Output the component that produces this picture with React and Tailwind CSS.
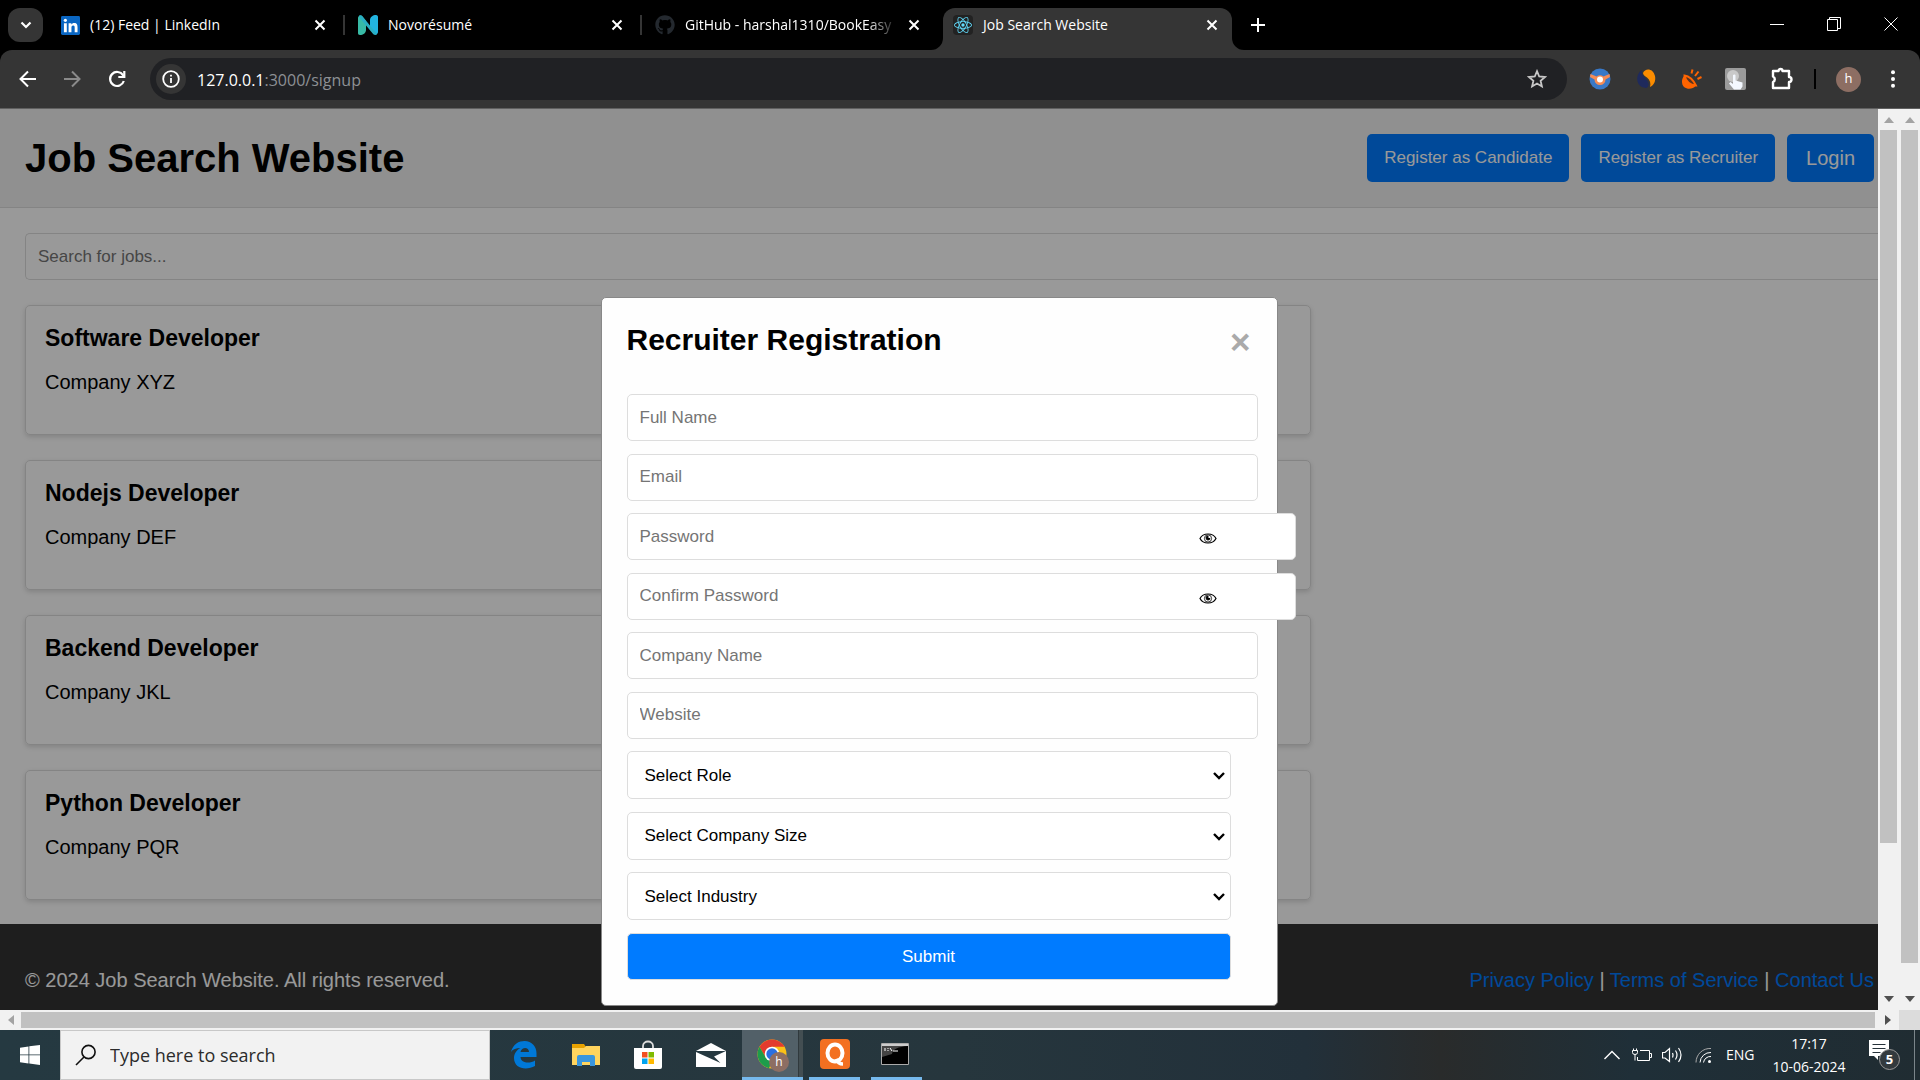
import { SiReact } from "react-icons/si";
import { FaGithub } from "react-icons/fa";

const uiFont = "font-['Open_Sans','Noto_Sans',sans-serif]";

function CloseX() {
  return (
    <svg viewBox="0 0 12 12" className="size-3 shrink-0" fill="none" stroke="#fff" strokeWidth="2">
      <path d="M1.5 1.5l9 9M10.5 1.5l-9 9" />
    </svg>
  );
}

function LinkedIn() {
  return (
    <svg viewBox="0 0 20 20" className="size-[19px] shrink-0">
      <rect width="20" height="20" rx="1.5" fill="#0a66c2" />
      <g fill="#fff">
        <circle cx="4.6" cy="4.6" r="1.7" />
        <path d="M3.1 7.6h3v9.4h-3zM8 7.6h2.9v1.3c.5-.9 1.6-1.6 3-1.6 3 0 3.5 2 3.5 4.500V17h-3v-4.600c0-1.200 0-2.500-1.600-2.500s-1.800 1.200-1.800 2.500V17H8z" />
      </g>
    </svg>
  );
}

function Novo() {
  return (
    <svg viewBox="0 0 20 20" className="size-5 shrink-0">
      <path d="M0 3C0 .5 3-.5 4.500 1.500L8 6v9c0 3-3 5-6 5-1.500 0-2-1-2-2z" fill="#38baa5" />
      <path d="M20 17c0 2.500-3 3.500-4.500 1.500L12 14V5c0-3 3-5 6-5 1.500 0 2 1 2 2z" fill="#22b3df" />
      <path d="M1 .8C2.500-.3 4 .5 5 2l14 17c-1 1.300-3 1.300-4.300-.5L1 2z" fill="#2aafc2" />
    </svg>
  );
}

const tabs = [
  { title: "(12) Feed | LinkedIn", icon: <LinkedIn /> },
  { title: "Novorésumé", icon: <Novo /> },
  { title: "GitHub - harshal1310/BookEasy", icon: <FaGithub className="size-5 shrink-0 text-[#24292f]" />, fade: true },
];

function TabStrip() {
  return (
    <div className="flex h-[50px] shrink-0 items-end bg-black text-sm text-white">
      <button aria-label="Search tabs" className="mb-2 ml-2 mr-[18px] grid h-[34px] w-[35px] shrink-0 place-items-center rounded-xl bg-[#353535]">
        <svg viewBox="0 0 12 8" className="h-2 w-3" fill="none" stroke="#fff" strokeWidth="2.200"><path d="M1.500 1.500L6 6l4.500-4.500" /></svg>
      </button>
      {tabs.map((t) => (
        <div key={t.title} className={`mb-2 flex h-[34px] shrink-0 items-center ${t.fade ? "w-[288px]" : "w-[297px]"}`}>
          <div className="flex w-[265px] items-center gap-[10px]">
            {t.icon}
            <span className={`flex-1 whitespace-nowrap ${t.fade ? "[mask-image:linear-gradient(to_right,#000_85%,transparent)]" : ""}`}>{t.title}</span>
            <button aria-label="Close tab"><CloseX /></button>
          </div>
          {!t.fade && <div className="ml-[17px] h-5 w-[2px] bg-[#353535]" />}
        </div>
      ))}
      <div className="relative flex h-[42px] w-[289px] shrink-0 items-center gap-[10px] rounded-t-xl bg-[#353535] pb-2 pl-[10px] pr-[14px]">
        <svg viewBox="0 0 12 12" className="absolute -left-3 bottom-0 size-3"><path d="M12 0v12H0A12 12 0 0012 0z" fill="#353535" /></svg>
        <svg viewBox="0 0 12 12" className="absolute -right-3 bottom-0 size-3"><path d="M0 0v12h12A12 12 0 010 0z" fill="#353535" /></svg>
        <span className="grid size-5 place-items-center rounded bg-[#222]"><SiReact className="size-[18px] text-[#61dafb]" /></span>
        <span className="flex-1 whitespace-nowrap">Job Search Website</span>
        <button aria-label="Close tab"><CloseX /></button>
      </div>
      <button aria-label="New tab" className="mb-[18px] ml-[19px]">
        <svg viewBox="0 0 14 14" className="size-[14px]" stroke="#fff" strokeWidth="2"><path d="M7 0v14M0 7h14" /></svg>
      </button>
      <div className="mb-[19px] ml-auto mr-[22px] flex items-center gap-[43px]">
        <button aria-label="Minimize"><svg viewBox="0 0 14 14" className="size-[14px]" stroke="#fff"><path d="M0 7.500h14" /></svg></button>
        <button aria-label="Restore"><svg viewBox="0 0 14 14" className="size-[14px]" stroke="#fff" fill="none"><path d="M.5 2.500h10v11h-10zM2.500 2.500v-2h11v11h-3" /></svg></button>
        <button aria-label="Close window"><svg viewBox="0 0 14 14" className="size-[14px]" stroke="#fff"><path d="M.5.5l13 13M13.500.5l-13 13" /></svg></button>
      </div>
    </div>
  );
}

function Toolbar() {
  return (
    <div className="shrink-0 bg-black">
      <div className="flex h-[59px] items-center rounded-t-xl border-b border-[#606060] bg-[#353535]">
        <button aria-label="Back" className="ml-[19px]">
          <svg viewBox="0 0 18 18" className="size-[18px]" fill="none" stroke="#fff" strokeWidth="2"><path d="M17 9H2M9 1.500L1.500 9 9 16.500" /></svg>
        </button>
        <button aria-label="Forward" className="ml-[26px]">
          <svg viewBox="0 0 18 18" className="size-[18px]" fill="none" stroke="#8a8a8a" strokeWidth="2"><path d="M1 9h15M9 1.500L16.500 9 9 16.500" /></svg>
        </button>
        <button aria-label="Reload" className="ml-[27px]">
          <svg viewBox="0 0 18 18" className="size-[18px]" fill="none" stroke="#fff" strokeWidth="2.200"><path d="M15.800 11A7 7 0 1115 5.200l1 1.300" /><path d="M16.300 1v6h-6" /></svg>
        </button>
        <div className="ml-6 flex h-[42px] flex-1 items-center rounded-full bg-[#202124] pl-[6px] pr-5">
          <button aria-label="Site information" className="grid size-[30px] shrink-0 place-items-center rounded-full bg-[#353535]">
            <svg viewBox="0 0 18 18" className="size-[18px]" fill="none" stroke="#fff" strokeWidth="1.800"><circle cx="9" cy="9" r="7.800" /><path d="M9 8v5M9 4.800v1.800" /></svg>
          </button>
          <p className="ml-[11px] flex-1 pt-px text-base text-[#8d9094]"><span className="text-white">127.0.0.1</span>:3000/signup</p>
          <button aria-label="Bookmark">
            <svg viewBox="0 0 20 20" className="size-5" fill="none" stroke="#c7c7c7" strokeWidth="1.800"><path d="M10 2.200l2.200 5.300 5.800.5-4.400 3.800 1.300 5.600L10 14.500l-4.900 2.900 1.300-5.600L2 8l5.800-.5z" /></svg>
          </button>
        </div>
        <div className="ml-[22px] mr-6 flex items-center">
          <svg viewBox="0 0 22 22" className="size-[22px]"><circle cx="11" cy="11" r="10.500" fill="#3878c7" /><path d="M1.500 6l6 2.500a6 6 0 017 0l6-2.500.5 3-4.500 2.500a5.500 5.500 0 01-11 0L1 9z" fill="#f58b54" /><circle cx="11" cy="11.500" r="3" fill="#fff" /></svg>
          <svg viewBox="0 0 22 22" className="ml-6 size-[22px]"><path d="M7 2C1 5-1 19 11 20c4-1 3-6 0-9C7.500 8 6 5 7 2z" fill="#1f2a5c" /><path d="M8 5c2-5 10-5 12 3 1 5-1 9-5 11 1-4 0-7-3-9.500C10 8 8 7 8 5z" fill="#fb8c00" /></svg>
          <svg viewBox="0 0 22 22" className="ml-6 size-[22px]"><path d="M3.500 7.500C.5 10 0 16 3 19c4 3 9 2 12-1.500z" fill="#ff6400" /><path d="M3.500 7.500q7 1 11.500 10Q6 17 3.500 7.500z" fill="#5b3320" stroke="#ff6400" strokeWidth="1.800" /><path d="M10.500 5.500l1-4M14 8l3.500-4.500M16.500 11l4-2" stroke="#ff6400" strokeWidth="2" /></svg>
          <svg viewBox="0 0 22 22" className="ml-[22px] size-[22px]"><rect width="21" height="22" rx="2" fill="#9b9b9b" /><circle cx="8" cy="8" r="6" fill="#c9c9c9" /><path d="M8 7c1-1 2.500-.5 2.500.5v5l7 2v4l-2 3H9l-5-6 1.500-1.500L8 16z" fill="#f4f8ff" /></svg>
          <svg viewBox="0 0 22 24" className="ml-6 h-6 w-[22px]" fill="none" stroke="#fff" strokeWidth="2.400"><path d="M2 4h5.500a2 2 0 014 0H18v6a2.200 2.200 0 010 5v6H2v-6a3 3 0 000-5.500z" strokeLinejoin="round" /></svg>
          <div className="ml-[21px] h-5 w-[2px] bg-black" />
          <button aria-label="Profile" className="ml-5 grid size-[25px] place-items-center rounded-full bg-[#8d6e63] text-[13px] text-white">h</button>
          <button aria-label="Menu" className="ml-[29px]"><svg viewBox="0 0 6 18" className="h-[18px] w-[6px]" fill="#fff"><circle cx="3" cy="2.200" r="2" /><circle cx="3" cy="9" r="2" /><circle cx="3" cy="15.800" r="2" /></svg></button>
        </div>
      </div>
    </div>
  );
}

const jobs = [
  ["Software Developer", "Company XYZ"],
  ["Nodejs Developer", "Company DEF"],
  ["Backend Developer", "Company JKL"],
  ["Python Developer", "Company PQR"],
];

function Site() {
  return (
    <div className="flex min-h-full flex-col bg-white text-xl text-black">
      <header className="flex h-[99px] shrink-0 items-center justify-between border-b border-[#ddd] bg-[#f0f0f0] pl-[25px] pr-1">
        <h1 className="text-[40px] font-bold">Job Search Website</h1>
        <div className="flex gap-3 text-[17px] text-white">
          <button className="h-12 rounded-[5px] bg-[#007bff] px-[17px]">Register as Candidate</button>
          <button className="h-12 rounded-[5px] bg-[#007bff] px-[17px]">Register as Recruiter</button>
          <button className="h-12 rounded-[5px] bg-[#007bff] px-[19px] text-xl">Login</button>
        </div>
      </header>
      <main className="flex-1 pb-6 pl-[25px] pt-[25px]">
        <input aria-label="Search for jobs" placeholder="Search for jobs..." className="block h-[47px] w-full rounded-l-[5px] border border-r-0 border-[#ddd] px-3 text-[17px] placeholder:text-[#757575]" />
        <div className="mt-[25px] flex w-[calc(70%-11px)] flex-col gap-[25px]">
          {jobs.map(([title, company]) => (
            <article key={title} className="h-[130px] rounded-[5px] border border-[#ddd] px-[19px] pt-[18px] shadow-[0_2px_5px_rgba(0,0,0,0.15)]">
              <h3 className="text-[23px] font-bold leading-7">{title}</h3>
              <p className="mt-4 leading-7">{company}</p>
            </article>
          ))}
        </div>
      </main>
      <footer className="flex h-[86px] shrink-0 items-center justify-between bg-[#333] pl-[25px] pr-1 pt-[26px] text-white">
        <p>© 2024 Job Search Website. All rights reserved.</p>
        <p>
          <a href="#privacy" className="text-[#007bff]">Privacy Policy</a> | <a href="#terms" className="text-[#007bff]">Terms of Service</a> | <a href="#contact" className="text-[#007bff]">Contact Us</a>
        </p>
      </footer>
    </div>
  );
}

function Eye() {
  return (
    <svg viewBox="0 0 18 11" className="h-[11px] w-[18px]" fill="none" stroke="#000"><path d="M1 5.500C4-.5 14-.5 17 5.500 14 11.500 4 11.500 1 5.500z" strokeWidth="1.200" /><circle cx="9" cy="5.500" r="3.600" strokeWidth=".8" /><path d="M9 3v2.500h2A2 2 0 119 3z" fill="#000" /></svg>
  );
}

const field = "block h-[47px] rounded-[5px] border border-[#ddd] bg-white px-3 text-[17px] placeholder:text-[#757575]";

function TextField({ label }) {
  return <input aria-label={label} placeholder={label} className={`${field} w-[631px]`} />;
}

function PasswordField({ label }) {
  return (
    <div className="relative">
      <input type="password" aria-label={label} placeholder={label} className={`${field} w-[669px]`} />
      <button type="button" aria-label="Show password" className="absolute left-[572px] top-5"><Eye /></button>
    </div>
  );
}

function SelectField({ label }) {
  return (
    <div className="relative">
      <select aria-label={label} className="block h-12 w-full appearance-none rounded-[5px] border border-[#ddd] bg-white px-[17px] text-[17px]">
        <option>{label}</option>
      </select>
      <svg viewBox="0 0 12 8" className="pointer-events-none absolute right-[6px] top-[21px] h-2 w-3" fill="none" stroke="#000" strokeWidth="2.400"><path d="M1 1l5 5 5-5" /></svg>
    </div>
  );
}

function Modal() {
  return (
    <div className="absolute inset-0 flex items-start justify-center bg-black/40 pt-[188px]">
      <section role="dialog" aria-label="Recruiter Registration" className="w-[677px] rounded-[5px] border border-[#888] bg-[#fefefe] pb-[25px] pl-[25px] pr-[46px] pt-6">
        <div className="flex h-[72px] items-start justify-between">
          <h2 className="text-[30px] font-bold leading-9">Recruiter Registration</h2>
          <button aria-label="Close" className="-mr-5 text-[35px] font-bold leading-10 text-[#aaa]">×</button>
        </div>
        <form className="flex min-h-[586px] flex-col justify-between">
          <TextField label="Full Name" />
          <TextField label="Email" />
          <PasswordField label="Password" />
          <PasswordField label="Confirm Password" />
          <TextField label="Company Name" />
          <TextField label="Website" />
          <SelectField label="Select Role" />
          <SelectField label="Select Company Size" />
          <SelectField label="Select Industry" />
          <button type="button" className="h-[47px] w-full rounded-[5px] border border-[#ddd] bg-[#007bff] text-[17px] text-white">Submit</button>
        </form>
      </section>
    </div>
  );
}

function Arrow({ dir, color }) {
  const d = { up: "M0 8l5-6 5 6z", down: "M0 2l5 6 5-6z", left: "M8 0L2 5l6 5z", right: "M2 0l6 5-6 5z" }[dir];
  return <svg viewBox="0 0 10 10" className="size-[10px] shrink-0" fill={color}><path d={d} /></svg>;
}

function VScroll({ thumb }) {
  return (
    <div className="flex w-[21px] shrink-0 flex-col items-center bg-[#f1f1f1] py-[6px]">
      <Arrow dir="up" color="#a3a3a3" />
      <div className="min-h-0 w-full flex-1 px-[2px] py-[5px]"><div className={`${thumb} bg-[#c1c1c1]`} /></div>
      <Arrow dir="down" color="#505050" />
    </div>
  );
}

function HScroll() {
  return (
    <div className="flex h-5 shrink-0 bg-[#f1f1f1]">
      <div className="flex flex-1 items-center px-[6px]">
        <Arrow dir="left" color="#a3a3a3" />
        <div className="mx-[5px] h-4 flex-1"><div className="mr-[3px] h-4 bg-[#c1c1c1]" /></div>
        <Arrow dir="right" color="#505050" />
      </div>
      <div className="w-[21px] bg-[#dcdcdc]" />
    </div>
  );
}

function Taskbar() {
  return (
    <div className="flex h-[50px] shrink-0 items-stretch bg-[linear-gradient(to_right,#253941,#26363d_50%,#22303a_68%,#292b2b_75%,#1f2f38_85%,#202c32)] text-white">
      <button aria-label="Start" className="grid w-[60px] place-items-center">
        <svg viewBox="0 0 20 20" className="size-5" fill="#fff"><path d="M0 2.800l8.500-1.300v8H0zM9.300 1.300L20 0v9.500H9.300zM0 10.300h8.500v8.200L0 17.300zM9.300 10.300H20V20L9.300 18.600z" /></svg>
      </button>
      <label className="flex w-[430px] items-center border border-[#c8c8c8] bg-[#f2f2f2] pl-[14px]">
        <svg viewBox="0 0 22 22" className="size-[22px]" fill="none" stroke="#111" strokeWidth="1.600"><circle cx="13.500" cy="8" r="6.600" /><path d="M9 13L1 21" /></svg>
        <input aria-label="Type here to search" placeholder="Type here to search" className="ml-[13px] flex-1 bg-transparent text-lg placeholder:text-[#2b2b2b]" />
      </label>
      <button aria-label="Edge" className="ml-[3px] grid w-[62px] place-items-center">
        <svg viewBox="0 0 26 28" className="h-7 w-[26px]"><path d="M0 11C2 3 8 0 13.500 0 21 0 25.500 6 25.500 12v4H9.500c.3 6 9 7 14.500 3.500V25C15 30 3 27.500 3 17c0-4 2.500-8 6.500-10C5 7 2 8 0 11zm9.500 0H18c0-5.500-7.500-5.500-8.500 0z" fill="#0078d7" /></svg>
      </button>
      <button aria-label="File Explorer" className="grid w-[62px] place-items-center">
        <svg viewBox="0 0 28 24" className="h-6 w-7"><path d="M0 1h12l2 3h13v6H0z" fill="#e8a200" /><path d="M0 5h12l2-2h14v19H0z" fill="#ffd45e" /><path d="M5 23v-9q0-2 2-2h14q2 0 2 2v9h-5v-4h-8v4z" fill="#3a96dd" /></svg>
      </button>
      <button aria-label="Store" className="grid w-[62px] place-items-center">
        <svg viewBox="0 0 30 30" className="size-[30px]"><path d="M10 8V6c0-6 10-6 10 0v2" fill="none" stroke="#ddd" strokeWidth="1.800" /><path d="M1 8h28v19q0 2-2 2H3q-2 0-2-2z" fill="#fff" /><path d="M9 12h5.500v5.500H9z" fill="#f25022" /><path d="M15.500 12H21v5.500h-5.500z" fill="#7fba00" /><path d="M9 18.500h5.500V24H9z" fill="#00a4ef" /><path d="M15.500 18.500H21V24h-5.500z" fill="#ffb900" /></svg>
      </button>
      <button aria-label="Mail" className="grid w-[63px] place-items-center">
        <svg viewBox="0 0 30 24" className="h-6 w-[30px]"><path d="M0 8L15 0l15 8v16H0z" fill="#fff" /><path d="M0 8h30L18 13.500l6.500 6.500L0 9z" fill="#253840" /></svg>
      </button>
      <button aria-label="Chrome" className="relative flex w-[61px] items-center border-b-[3px] border-[#76b9ed] bg-[#434e52] pr-1">
        <span className="grid h-full flex-1 place-items-center border-r border-[#30393d] bg-[#526068] pl-1">
          <svg viewBox="0 0 30 30" className="size-[30px]"><circle cx="15" cy="15" r="14.500" fill="#fbc116" /><path d="M2.500 7.700A14.500 14.500 0 0127.600 7.700H15L8.700 18.600z" fill="#e33b2e" /><path d="M2.500 7.700L8.700 18.600 15 22.200 12 29.200A14.500 14.500 0 012.500 7.700z" fill="#1e9c4b" /><circle cx="15" cy="15" r="7.300" fill="#fff" /><circle cx="15" cy="15" r="5.700" fill="#2a6fe0" /></svg>
        </span>
        <span className="absolute bottom-[5px] right-[14px] grid size-5 place-items-center rounded-full bg-[#8d6e63] text-xs">h</span>
      </button>
      <button aria-label="Q" className="ml-[6px] grid w-[51px] place-items-center border-b-[3px] border-[#76b9ed]">
        <svg viewBox="0 0 30 30" className="size-[30px]"><rect width="30" height="30" rx="4" fill="#f37021" /><ellipse cx="15" cy="14" rx="7.500" ry="8.500" fill="none" stroke="#fff" strokeWidth="4" /><path d="M16 20q2 5 7 5" fill="none" stroke="#fff" strokeWidth="3.500" /></svg>
      </button>
      <button aria-label="Command Prompt" className="ml-[11px] grid w-[51px] place-items-center border-b-[3px] border-[#76b9ed] pr-1">
        <svg viewBox="0 0 28 22" className="h-[22px] w-7"><path d="M.5.500h27v21H.5z" fill="#000" stroke="#aaa" /><path d="M1 1h26v2H1z" fill="#ccc" /><path d="M1 3h26q-15 1-16 8L1 14z" fill="#444" /><path d="M4 5v3M7 5v1M7 7v1M9 5l2 3M12 8h5" stroke="#fff" /></svg>
      </button>
      <div className="ml-auto flex items-center">
        <svg viewBox="0 0 16 10" className="h-[10px] w-4" fill="none" stroke="#fff" strokeWidth="1.400"><path d="M.5 9L8 1.500 15.500 9" /></svg>
        <svg viewBox="0 0 20 14" className="ml-3 h-[14px] w-5" fill="none" stroke="#fff"><path d="M8 2.500h9.500v10h-12V9M17.500 5.500h2v4h-2M1.500.5v2M4.500.5v2M.5 2.500h5v2q0 2-2.500 2T.5 4.500zM3 6.500v6" /></svg>
        <svg viewBox="0 0 21 18" className="ml-[10px] h-[18px] w-[21px]" fill="none" stroke="#fff"><path d="M.5 6.500H3l4.500-4v13L3 12H.5zM10.500 7q1 2 0 4.500M13.500 4.500q3 4.500 0 9M16.500 2q5 7 0 14" strokeWidth="1.200" /></svg>
        <svg viewBox="0 0 17 17" className="ml-3 size-[17px]" fill="none" stroke="#fff"><path d="M1 15.500A14 14 0 0116 1.500" stroke="#aaa" /><path d="M5 15.500A10.500 10.500 0 0116 5.500M8.500 15.500A7 7 0 0116 9.500" /><circle cx="14.500" cy="14.500" r="1.500" fill="#fff" stroke="none" /></svg>
        <span className="ml-[14px] w-[30px] text-sm">ENG</span>
        <div className="ml-[11px] w-[84px] whitespace-nowrap text-center text-sm leading-[23px]"><div>17:17</div><div>10-06-2024</div></div>
        <div className="relative ml-[18px] h-[30px] w-[31px]">
          <svg viewBox="0 0 20 20" className="size-5"><path d="M0 0h20v16H9v4l-4-4H0z" fill="#fff" /><path d="M3.500 4.500h13M3.500 8.500h13M3.500 12.500h8" stroke="#26323a" /></svg>
          <span className="absolute bottom-0 right-0 grid size-[21px] place-items-center rounded-full border border-[#999] bg-[#333a3e] text-[13px] font-bold">5</span>
        </div>
        <div className="ml-[14px] mr-[5px] h-[50px] w-px bg-[#7b858a]" />
      </div>
    </div>
  );
}

export default function App() {
  return (
    <div className={`flex h-screen flex-col overflow-hidden ${uiFont}`}>
      <TabStrip />
      <Toolbar />
      <div className="flex min-h-0 flex-1">
        <div className="relative flex-1 overflow-hidden font-['Liberation_Sans',Arial,sans-serif]">
          <Site />
          <Modal />
        </div>
        <VScroll thumb="h-[83%]" />
        <VScroll thumb="h-[97%]" />
      </div>
      <HScroll />
      <Taskbar />
    </div>
  );
}
